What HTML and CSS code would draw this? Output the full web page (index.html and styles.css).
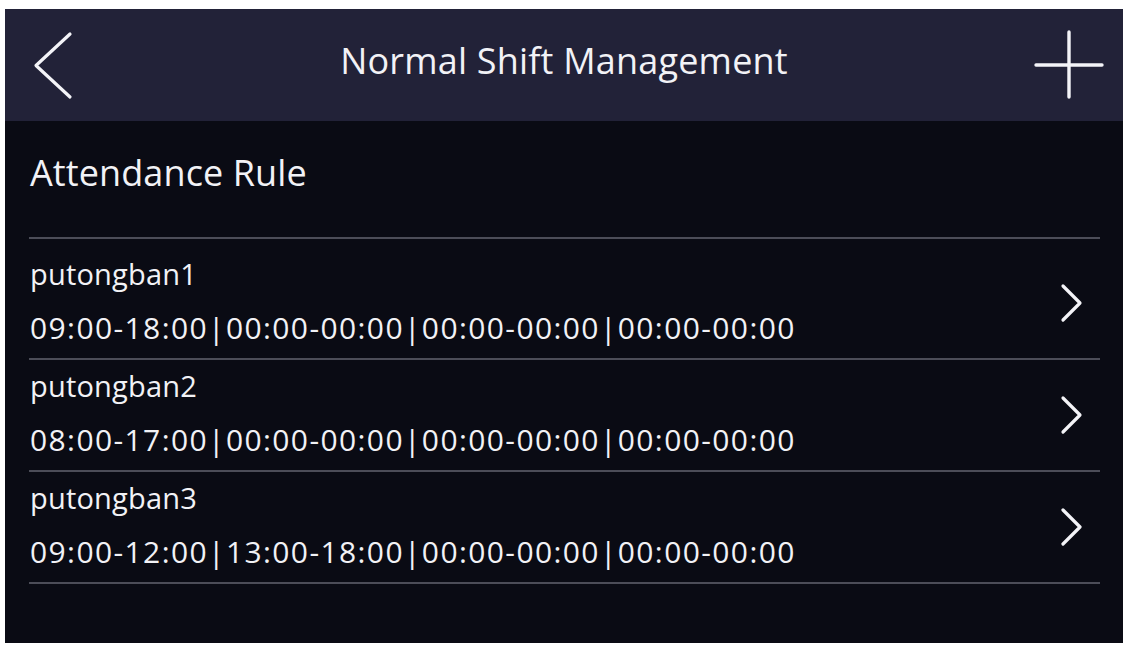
FILE: index.html
```html
<!DOCTYPE html>
<html lang="en">
<head>
<meta charset="utf-8">
<title>Normal Shift Management</title>
<link rel="stylesheet" href="styles.css">
</head>
<body>
<div class="screen">
  <header class="topbar">
    <div class="side side-left">
      <svg class="icon-back" width="45" height="73" viewBox="0 0 45 73" aria-hidden="true">
        <path d="M40 5 L6 36.5 L40 68" fill="none" stroke="#f4f4f8" stroke-width="3.2" stroke-linecap="round" stroke-linejoin="round"/>
      </svg>
    </div>
    <h1 class="title">Normal Shift Management</h1>
    <div class="side side-right">
      <svg class="icon-add" width="72" height="72" viewBox="0 0 72 72" aria-hidden="true">
        <path d="M3 36 H69 M36 3 V68" fill="none" stroke="#f4f4f8" stroke-width="3.4" stroke-linecap="round"/>
      </svg>
    </div>
  </header>
  <main class="content">
    <h2 class="section-title">Attendance Rule</h2>
    <ul class="shift-list">
      <li class="shift-row">
        <div class="shift-text">
          <div class="shift-name">putongban1</div>
          <div class="shift-time">09:00-18:00|00:00-00:00|00:00-00:00|00:00-00:00</div>
        </div>
        <svg class="icon-next" width="24" height="40" viewBox="0 0 24 40" aria-hidden="true">
          <path d="M3 3 L20 20 L3 37" fill="none" stroke="#f4f4f8" stroke-width="3.2" stroke-linecap="round" stroke-linejoin="round"/>
        </svg>
      </li>
      <li class="shift-row">
        <div class="shift-text">
          <div class="shift-name">putongban2</div>
          <div class="shift-time">08:00-17:00|00:00-00:00|00:00-00:00|00:00-00:00</div>
        </div>
        <svg class="icon-next" width="24" height="40" viewBox="0 0 24 40" aria-hidden="true">
          <path d="M3 3 L20 20 L3 37" fill="none" stroke="#f4f4f8" stroke-width="3.2" stroke-linecap="round" stroke-linejoin="round"/>
        </svg>
      </li>
      <li class="shift-row">
        <div class="shift-text">
          <div class="shift-name">putongban3</div>
          <div class="shift-time">09:00-12:00|13:00-18:00|00:00-00:00|00:00-00:00</div>
        </div>
        <svg class="icon-next" width="24" height="40" viewBox="0 0 24 40" aria-hidden="true">
          <path d="M3 3 L20 20 L3 37" fill="none" stroke="#f4f4f8" stroke-width="3.2" stroke-linecap="round" stroke-linejoin="round"/>
        </svg>
      </li>
    </ul>
  </main>
</div>
</body>
</html>
```

FILE: styles.css
```css
* {
  box-sizing: border-box;
}

html, body {
  margin: 0;
  padding: 0;
  background: #ffffff;
}

body {
  font-family: "Open Sans", "Noto Sans", "Liberation Sans", sans-serif;
  color: #f2f2f6;
}

.screen {
  margin: 9px 0 0 5px;
  width: 1118px;
  height: 634px;
  background: #0a0b14;
  display: flex;
  flex-direction: column;
  overflow: hidden;
}

.topbar {
  height: 112px;
  flex: 0 0 112px;
  background: #222238;
  display: grid;
  grid-template-columns: 1fr auto 1fr;
  align-items: center;
}

.side {
  display: flex;
  align-items: center;
}

.side-left {
  justify-content: flex-start;
  padding-left: 25px;
}

.side-right {
  justify-content: flex-end;
  padding-right: 18px;
}

.icon-back,
.icon-add,
.icon-next {
  display: block;
}

.title {
  margin: 0 0 8px;
  font-size: 36px;
  line-height: 36px;
  font-weight: 400;
  letter-spacing: 0.2px;
  color: #f2f2f6;
}

.content {
  padding: 0 23px 0 24px;
}

.section-title {
  margin: 0;
  padding: 34px 0 0 1px;
  height: 118px;
  font-size: 36px;
  line-height: 36px;
  font-weight: 400;
  letter-spacing: 0.1px;
  border-bottom: 2px solid #4c4d58;
}

.shift-list {
  list-style: none;
  margin: 9px 0 0;
  padding: 0;
}

.shift-row {
  height: 112px;
  border-bottom: 2px solid #4c4d58;
  display: flex;
  align-items: center;
  justify-content: space-between;
  padding-right: 16px;
}

.shift-text {
  align-self: flex-start;
  padding: 11px 0 0 1px;
}

.shift-name {
  font-size: 29px;
  line-height: 29px;
  letter-spacing: 0.2px;
}

.shift-time {
  margin-top: 25px;
  font-size: 30px;
  line-height: 30px;
  letter-spacing: 1.4px;
}
```
